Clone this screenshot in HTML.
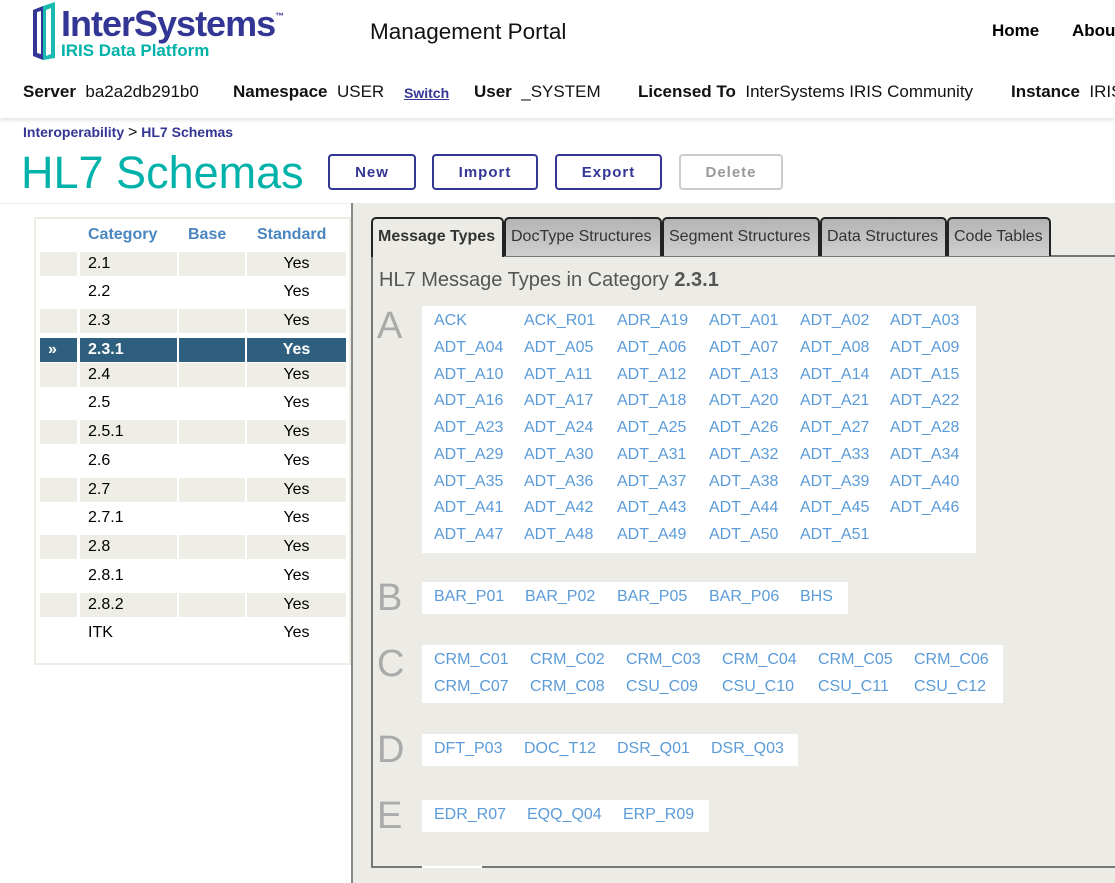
<!DOCTYPE html>
<html><head><meta charset="utf-8"><style>
*{margin:0;padding:0;box-sizing:border-box}
body{width:1115px;height:883px;overflow:hidden;background:#fff;font-family:"Liberation Sans",Arial,sans-serif;position:relative}
.a{position:absolute;white-space:nowrap}
.hdr{position:absolute;left:0;top:0;width:1115px;height:118px;background:#fff;box-shadow:0 2px 4px rgba(0,0,0,.12)}
.b{font-weight:bold}
.btn{position:absolute;top:154px;height:36px;border:2px solid #333695;border-radius:4px;color:#333695;font-weight:bold;font-size:15px;letter-spacing:1px;text-align:center;line-height:34px;background:#fff}
.row{position:absolute;left:40px;width:306px;height:24px}
.row div{position:absolute;top:0;height:24px;font-size:16px;line-height:24px}
.sh div{background:#efeee6}
.sel div{background:#2f5f7e;color:#fff;font-weight:bold}
.tab{position:absolute;top:217px;height:39px;border:2px solid #222;border-bottom:none;border-radius:5px 5px 0 0;background:linear-gradient(#b4b4b4,#cfcfcf);font-size:16px;color:#333;line-height:36px;padding:0 5px;white-space:nowrap}
.box{position:absolute;background:#fff}
.L{position:absolute;font-size:38px;color:#aaa;line-height:40px}
.m{position:absolute;font-size:16px;color:#5b9bd8;line-height:18px;white-space:nowrap;margin-top:2px}
</style></head><body>
<div class="hdr"></div>
<svg class="a" style="left:29px;top:2px" width="30" height="62" viewBox="0 0 30 62">
<polygon points="4,8 14,4 14,58 4,54" fill="#333695"/>
<polygon points="14,4 26,0 26,56 14,58" fill="#00b2a9" opacity=".9"/>
<polygon points="8,10 12,9 12,52 8,51" fill="#fff"/>
<polygon points="17,8 22,6 22,52 17,54" fill="#fff"/>
</svg>
<div class="a b" style="left:61px;top:3px;font-size:36px;color:#333695;letter-spacing:-1px">InterSystems<span style="font-size:9px;vertical-align:top;position:relative;top:8px">™</span></div>
<div class="a b" style="left:61px;top:41px;font-size:17px;color:#00b2a9">IRIS Data Platform</div>
<div class="a" style="left:370px;top:19px;font-size:22.5px;color:#111">Management Portal</div>
<div class="a b" style="left:992px;top:21px;font-size:17px">Home</div>
<div class="a b" style="left:1072px;top:21px;font-size:17px">About</div>
<div class="a" style="left:23px;top:82px;font-size:17px;color:#111"><b>Server</b>&nbsp; ba2a2db291b0</div>
<div class="a" style="left:233px;top:82px;font-size:17px;color:#111"><b>Namespace</b>&nbsp; USER</div>
<div class="a b" style="left:404px;top:85px;font-size:14px;color:#333695;text-decoration:underline">Switch</div>
<div class="a" style="left:474px;top:82px;font-size:17px;color:#111"><b>User</b>&nbsp; _SYSTEM</div>
<div class="a" style="left:638px;top:82px;font-size:17px;color:#111"><b>Licensed To</b>&nbsp; InterSystems IRIS Community</div>
<div class="a" style="left:1011px;top:82px;font-size:17px;color:#111"><b>Instance</b>&nbsp; IRIS</div>
<div class="a b" style="left:23px;top:124px;font-size:14px;color:#333695">Interoperability <span style="color:#111;font-weight:normal;font-size:16px">&gt;</span> HL7 Schemas</div>
<div class="a" style="left:21px;top:147px;font-size:45px;color:#00b2a9">HL7 Schemas</div>
<div class="btn" style="left:328px;width:88px">New</div>
<div class="btn" style="left:432px;width:106px">Import</div>
<div class="btn" style="left:555px;width:107px">Export</div>
<div class="btn" style="left:679px;width:104px;border-color:#ccc;color:#999">Delete</div>
<div class="a" style="left:0;top:203px;width:1115px;height:680px;background:#fff;border-top:1px solid #eee"></div>
<div class="a" style="left:351px;top:203px;width:764px;height:680px;background:#ecebe5;border-left:2px solid #888"></div>
<div class="a" style="left:34px;top:217px;width:317px;height:448px;border:2px solid #eeede5;background:#fff"></div>
<div class="a b" style="left:88px;top:226px;font-size:16px;color:#4a86c0">Category</div>
<div class="a b" style="left:188px;top:226px;font-size:16px;color:#4a86c0">Base</div>
<div class="a b" style="left:257px;top:226px;font-size:16px;color:#4a86c0">Standard</div>
<div class="row sh" style="top:252px"><div style="left:0;width:37px"></div><div style="left:40px;width:97px;padding-left:8px">2.1</div><div style="left:139px;width:66px"></div><div style="left:207px;width:99px;text-align:center">Yes</div></div>
<div class="row" style="top:280px"><div style="left:40px;padding-left:8px">2.2</div><div style="left:207px;width:99px;text-align:center">Yes</div></div>
<div class="row sh" style="top:309px"><div style="left:0;width:37px"></div><div style="left:40px;width:97px;padding-left:8px">2.3</div><div style="left:139px;width:66px"></div><div style="left:207px;width:99px;text-align:center">Yes</div></div>
<div class="row sel" style="top:338px"><div style="left:0;width:37px;padding-left:8px">»</div><div style="left:40px;width:97px;padding-left:8px">2.3.1</div><div style="left:139px;width:66px"></div><div style="left:207px;width:99px;text-align:center">Yes</div></div>
<div class="row sh" style="top:363px"><div style="left:0;width:37px"></div><div style="left:40px;width:97px;padding-left:8px">2.4</div><div style="left:139px;width:66px"></div><div style="left:207px;width:99px;text-align:center">Yes</div></div>
<div class="row" style="top:391px"><div style="left:40px;padding-left:8px">2.5</div><div style="left:207px;width:99px;text-align:center">Yes</div></div>
<div class="row sh" style="top:420px"><div style="left:0;width:37px"></div><div style="left:40px;width:97px;padding-left:8px">2.5.1</div><div style="left:139px;width:66px"></div><div style="left:207px;width:99px;text-align:center">Yes</div></div>
<div class="row" style="top:449px"><div style="left:40px;padding-left:8px">2.6</div><div style="left:207px;width:99px;text-align:center">Yes</div></div>
<div class="row sh" style="top:478px"><div style="left:0;width:37px"></div><div style="left:40px;width:97px;padding-left:8px">2.7</div><div style="left:139px;width:66px"></div><div style="left:207px;width:99px;text-align:center">Yes</div></div>
<div class="row" style="top:506px"><div style="left:40px;padding-left:8px">2.7.1</div><div style="left:207px;width:99px;text-align:center">Yes</div></div>
<div class="row sh" style="top:535px"><div style="left:0;width:37px"></div><div style="left:40px;width:97px;padding-left:8px">2.8</div><div style="left:139px;width:66px"></div><div style="left:207px;width:99px;text-align:center">Yes</div></div>
<div class="row" style="top:564px"><div style="left:40px;padding-left:8px">2.8.1</div><div style="left:207px;width:99px;text-align:center">Yes</div></div>
<div class="row sh" style="top:593px"><div style="left:0;width:37px"></div><div style="left:40px;width:97px;padding-left:8px">2.8.2</div><div style="left:139px;width:66px"></div><div style="left:207px;width:99px;text-align:center">Yes</div></div>
<div class="row" style="top:621px"><div style="left:40px;padding-left:8px">ITK</div><div style="left:207px;width:99px;text-align:center">Yes</div></div>

<div class="a" style="left:371px;top:255px;width:760px;height:613px;border:2px solid #777;background:#ecebe5"></div>
<div class="tab" style="left:371px;width:133px;background:#ecebe5;font-weight:bold;height:40px;z-index:2">Message Types</div>
<div class="tab" style="left:504px;width:158px">DocType Structures</div>
<div class="tab" style="left:662px;width:158px">Segment Structures</div>
<div class="tab" style="left:820px;width:127px">Data Structures</div>
<div class="tab" style="left:947px;width:104px">Code Tables</div>
<div class="a" style="left:379px;top:269px;font-size:20px;color:#555">HL7 Message Types in Category <b>2.3.1</b></div>

<div class="L" style="left:377px;top:306px">A</div>
<div class="box" style="left:422px;top:306px;width:554px;height:247px"></div>
<div class="m" style="left:434px;top:310px">ACK</div><div class="m" style="left:524px;top:310px">ACK_R01</div><div class="m" style="left:617px;top:310px">ADR_A19</div><div class="m" style="left:709px;top:310px">ADT_A01</div><div class="m" style="left:800px;top:310px">ADT_A02</div><div class="m" style="left:890px;top:310px">ADT_A03</div>
<div class="m" style="left:434px;top:337px">ADT_A04</div><div class="m" style="left:524px;top:337px">ADT_A05</div><div class="m" style="left:617px;top:337px">ADT_A06</div><div class="m" style="left:709px;top:337px">ADT_A07</div><div class="m" style="left:800px;top:337px">ADT_A08</div><div class="m" style="left:890px;top:337px">ADT_A09</div>
<div class="m" style="left:434px;top:364px">ADT_A10</div><div class="m" style="left:524px;top:364px">ADT_A11</div><div class="m" style="left:617px;top:364px">ADT_A12</div><div class="m" style="left:709px;top:364px">ADT_A13</div><div class="m" style="left:800px;top:364px">ADT_A14</div><div class="m" style="left:890px;top:364px">ADT_A15</div>
<div class="m" style="left:434px;top:390px">ADT_A16</div><div class="m" style="left:524px;top:390px">ADT_A17</div><div class="m" style="left:617px;top:390px">ADT_A18</div><div class="m" style="left:709px;top:390px">ADT_A20</div><div class="m" style="left:800px;top:390px">ADT_A21</div><div class="m" style="left:890px;top:390px">ADT_A22</div>
<div class="m" style="left:434px;top:417px">ADT_A23</div><div class="m" style="left:524px;top:417px">ADT_A24</div><div class="m" style="left:617px;top:417px">ADT_A25</div><div class="m" style="left:709px;top:417px">ADT_A26</div><div class="m" style="left:800px;top:417px">ADT_A27</div><div class="m" style="left:890px;top:417px">ADT_A28</div>
<div class="m" style="left:434px;top:444px">ADT_A29</div><div class="m" style="left:524px;top:444px">ADT_A30</div><div class="m" style="left:617px;top:444px">ADT_A31</div><div class="m" style="left:709px;top:444px">ADT_A32</div><div class="m" style="left:800px;top:444px">ADT_A33</div><div class="m" style="left:890px;top:444px">ADT_A34</div>
<div class="m" style="left:434px;top:471px">ADT_A35</div><div class="m" style="left:524px;top:471px">ADT_A36</div><div class="m" style="left:617px;top:471px">ADT_A37</div><div class="m" style="left:709px;top:471px">ADT_A38</div><div class="m" style="left:800px;top:471px">ADT_A39</div><div class="m" style="left:890px;top:471px">ADT_A40</div>
<div class="m" style="left:434px;top:497px">ADT_A41</div><div class="m" style="left:524px;top:497px">ADT_A42</div><div class="m" style="left:617px;top:497px">ADT_A43</div><div class="m" style="left:709px;top:497px">ADT_A44</div><div class="m" style="left:800px;top:497px">ADT_A45</div><div class="m" style="left:890px;top:497px">ADT_A46</div>
<div class="m" style="left:434px;top:524px">ADT_A47</div><div class="m" style="left:524px;top:524px">ADT_A48</div><div class="m" style="left:617px;top:524px">ADT_A49</div><div class="m" style="left:709px;top:524px">ADT_A50</div><div class="m" style="left:800px;top:524px">ADT_A51</div>

<div class="L" style="left:377px;top:578px">B</div>
<div class="box" style="left:422px;top:582px;width:426px;height:32px"></div>
<div class="m" style="left:434px;top:586px">BAR_P01</div><div class="m" style="left:525px;top:586px">BAR_P02</div><div class="m" style="left:617px;top:586px">BAR_P05</div><div class="m" style="left:709px;top:586px">BAR_P06</div><div class="m" style="left:800px;top:586px">BHS</div>

<div class="L" style="left:377px;top:644px">C</div>
<div class="box" style="left:422px;top:645px;width:581px;height:58px"></div>
<div class="m" style="left:434px;top:649px">CRM_C01</div><div class="m" style="left:530px;top:649px">CRM_C02</div><div class="m" style="left:626px;top:649px">CRM_C03</div><div class="m" style="left:722px;top:649px">CRM_C04</div><div class="m" style="left:818px;top:649px">CRM_C05</div><div class="m" style="left:914px;top:649px">CRM_C06</div>
<div class="m" style="left:434px;top:676px">CRM_C07</div><div class="m" style="left:530px;top:676px">CRM_C08</div><div class="m" style="left:626px;top:676px">CSU_C09</div><div class="m" style="left:722px;top:676px">CSU_C10</div><div class="m" style="left:818px;top:676px">CSU_C11</div><div class="m" style="left:914px;top:676px">CSU_C12</div>

<div class="L" style="left:377px;top:730px">D</div>
<div class="box" style="left:422px;top:734px;width:376px;height:32px"></div>
<div class="m" style="left:434px;top:738px">DFT_P03</div><div class="m" style="left:524px;top:738px">DOC_T12</div><div class="m" style="left:617px;top:738px">DSR_Q01</div><div class="m" style="left:711px;top:738px">DSR_Q03</div>

<div class="L" style="left:377px;top:796px">E</div>
<div class="box" style="left:422px;top:800px;width:287px;height:32px"></div>
<div class="m" style="left:434px;top:804px">EDR_R07</div><div class="m" style="left:527px;top:804px">EQQ_Q04</div><div class="m" style="left:623px;top:804px">ERP_R09</div>
<div class="box" style="left:422px;top:866px;width:60px;height:2px"></div>
</body></html>
